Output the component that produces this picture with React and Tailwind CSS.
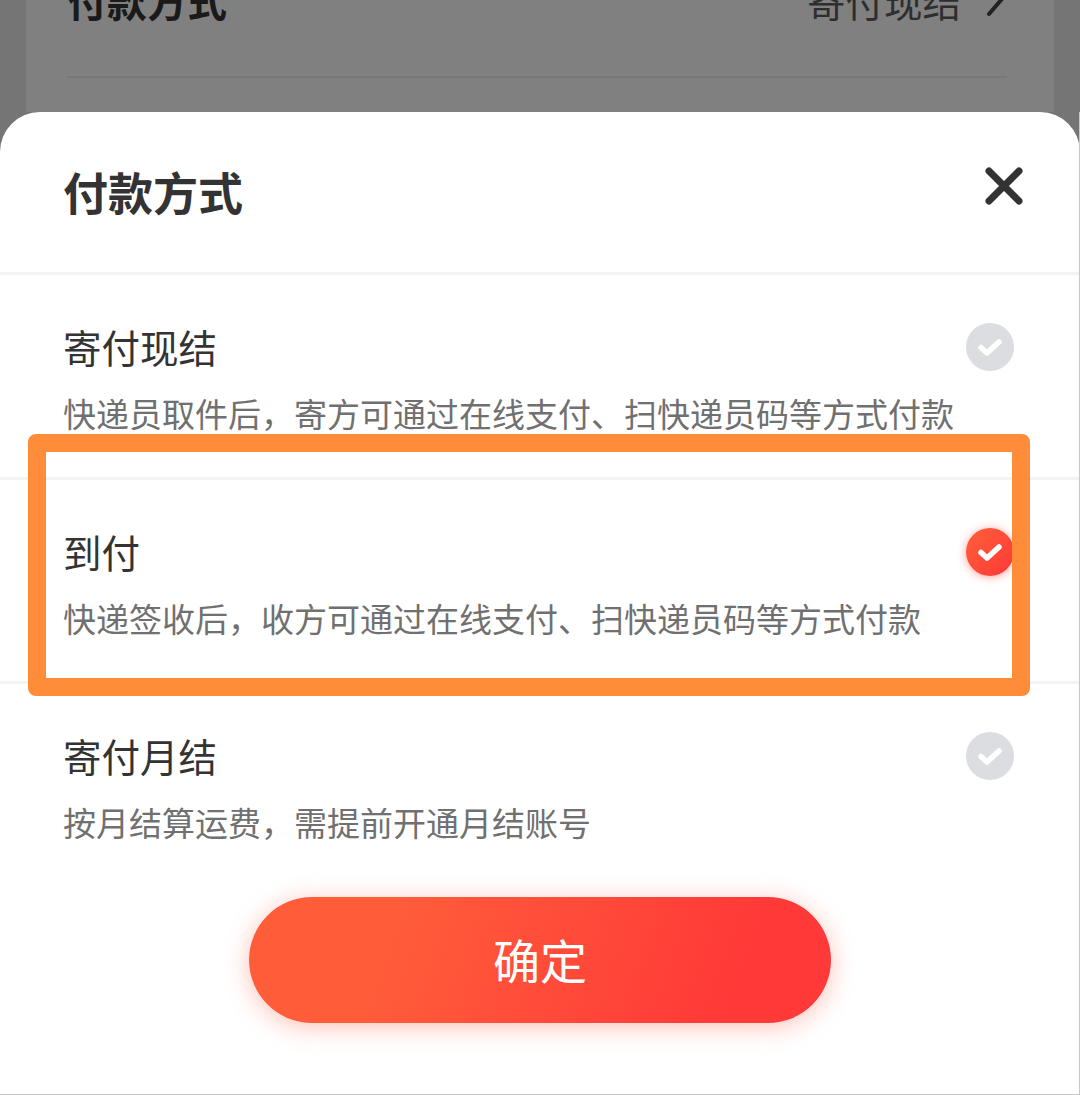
import React from "react";

const cjk = "font-['Noto_Sans_CJK_SC','Noto_Sans',sans-serif]";

const options = [
  { title: "寄付现结", desc: "快递员取件后，寄方可通过在线支付、扫快递员码等方式付款", selected: false },
  { title: "到付", desc: "快递签收后，收方可通过在线支付、扫快递员码等方式付款", selected: true },
  { title: "寄付月结", desc: "按月结算运费，需提前开通月结账号", selected: false },
];

const CheckMark = ({ selected }) => (
  <div
    className={
      selected
        ? "w-[48px] h-[48px] rounded-full flex items-center justify-center bg-gradient-to-br from-[#ff5e3a] to-[#ff3636] shadow-[0_1px_8px_rgba(255,60,50,0.5)]"
        : "w-[48px] h-[48px] rounded-full flex items-center justify-center bg-[#dcdde0]"
    }
  >
    <svg width="26" height="22" viewBox="0 0 26 22" fill="none">
      <path
        d="M4 11.5 L10 17 L22 6"
        stroke="white"
        strokeWidth="5.5"
        strokeLinecap="round"
        strokeLinejoin="round"
      />
    </svg>
  </div>
);

const App = () => {
  return (
    <div className={`relative w-[1080px] h-[1095px] overflow-hidden bg-[#757575] ${cjk}`}>
      {/* page behind the dimmed layer */}
      <div className="h-[112px] mx-[26px] bg-[#808080] pl-[41px] pr-[48px] overflow-hidden">
        <div className="h-[76px] -mt-[27px] flex items-start justify-between">
          <span className="text-[40px] leading-[54px] font-bold text-[#1a1a1a]">付款方式</span>
          <span className="flex items-start gap-[25px] text-[38.5px] leading-[54px] text-[#2e2e2e]">
            寄付现结
            <svg className="mt-[8px]" width="20" height="36" viewBox="0 0 20 36" fill="none">
              <path d="M3 3 L16 18 L3 33" stroke="#222" strokeWidth="4" strokeLinecap="round" strokeLinejoin="round" />
            </svg>
          </span>
        </div>
        <div className="mt-[27px] mr-[-1px] h-[2px] bg-[#777777]"></div>
      </div>

      <div className="h-[982px] bg-white rounded-t-[40px] flex flex-col">
        <div className="h-[160px] pl-[63px] pr-[56px] flex justify-between items-start">
          <span className="mt-[51px] text-[45px] leading-[58px] font-bold text-[#333333]">付款方式</span>
          <svg className="mt-[54px]" width="40" height="40" viewBox="0 0 40 40" fill="none">
            <path d="M5 5 L35 35 M35 5 L5 35" stroke="#333333" strokeWidth="7" strokeLinecap="round" />
          </svg>
        </div>

        {options.map((item) => (
          <div
            key={item.title}
            className="h-[204.5px] border-t-[3px] border-[#f3f3f3] pl-[63px] pr-[66px] pt-[40px]"
          >
            <div className="flex items-center justify-between h-[64px]">
              <span className="-mt-[2px] text-[38.5px] leading-[50px] text-[#333333]">{item.title}</span>
              <CheckMark selected={item.selected} />
            </div>
            <p className="mt-[10px] text-[33px] leading-[48px] text-[#707070] whitespace-nowrap">{item.desc}</p>
          </div>
        ))}

        <div className="flex justify-center mt-[11px]">
          <button className="w-[582px] h-[126px] rounded-full bg-[linear-gradient(110deg,#ff5c3a_25%,#ff3838_85%)] text-white text-[47px] shadow-[0_4px_24px_rgba(255,80,50,0.35)]">
            确定
          </button>
        </div>
      </div>

      {/* highlight frame drawn over the screenshot */}
      <div className="absolute left-[28px] top-[434px] w-[1002px] h-[262px] border-[18px] border-[#ff8c38] rounded-[8px]"></div>
      <div className="absolute right-0 top-[112px] bottom-0 w-[1px] bg-[#c8c8c8]"></div>
      <div className="absolute left-0 right-0 bottom-0 h-[1px] bg-[#c8c8c8]"></div>
    </div>
  );
};

export default App;
